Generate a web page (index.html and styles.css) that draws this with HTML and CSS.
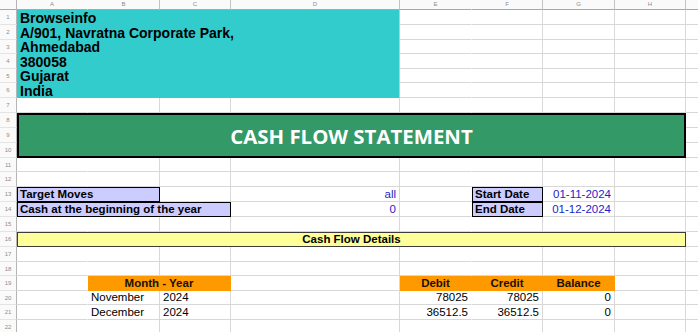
FILE: index.html
```html
<!DOCTYPE html>
<html lang="en">
<head>
<meta charset="utf-8">
<title>Cash Flow Statement</title>
<link rel="stylesheet" href="styles.css">
</head>
<body>
<table class="sheet">
  <colgroup>
    <col class="c-rh"><col class="c-a"><col class="c-b"><col class="c-c"><col class="c-d"><col class="c-e"><col class="c-f"><col class="c-g"><col class="c-h"><col class="c-x">
  </colgroup>
  <thead>
    <tr class="hdr">
      <th class="corner"></th><th class="ch nr">A</th><th class="ch">B</th><th class="ch">C</th><th class="ch">D</th><th class="ch nr">E</th><th class="ch">F</th><th class="ch">G</th><th class="ch">H</th><th class="ch fill"></th>
    </tr>
  </thead>
  <tbody>
    <tr class="h15"><th class="rh">1</th><td class="teal" colspan="4">Browseinfo</td><td class="nr"></td><td></td><td></td><td></td><td class="fill"></td></tr>
    <tr class="h15"><th class="rh">2</th><td class="teal" colspan="4">A/901, Navratna Corporate Park,</td><td class="nr"></td><td></td><td></td><td></td><td class="fill"></td></tr>
    <tr class="h14"><th class="rh">3</th><td class="teal" colspan="4">Ahmedabad</td><td class="nr"></td><td></td><td></td><td></td><td class="fill"></td></tr>
    <tr class="h15"><th class="rh">4</th><td class="teal" colspan="4">380058</td><td class="nr"></td><td></td><td></td><td></td><td class="fill"></td></tr>
    <tr class="h14"><th class="rh">5</th><td class="teal" colspan="4">Gujarat</td><td class="nr"></td><td></td><td></td><td></td><td class="fill"></td></tr>
    <tr class="h15"><th class="rh">6</th><td class="teal" colspan="4">India</td><td class="nr"></td><td></td><td></td><td></td><td class="fill"></td></tr>
    <tr class="h15"><th class="rh">7</th><td class="nr"></td><td></td><td></td><td></td><td class="nr"></td><td></td><td></td><td></td><td class="fill"></td></tr>
    <tr class="h15"><th class="rh">8</th><td class="band" colspan="8" rowspan="3">CASH FLOW STATEMENT</td><td class="fill"></td></tr>
    <tr class="h15"><th class="rh">9</th><td class="fill"></td></tr>
    <tr class="h15"><th class="rh">10</th><td class="fill"></td></tr>
    <tr class="h14"><th class="rh">11</th><td class="nr"></td><td></td><td></td><td></td><td class="nr"></td><td></td><td></td><td></td><td class="fill"></td></tr>
    <tr class="h15"><th class="rh">12</th><td class="nr"></td><td></td><td></td><td></td><td class="nr"></td><td></td><td></td><td></td><td class="fill"></td></tr>
    <tr class="h15"><th class="rh">13</th><td class="lav" colspan="2">Target Moves</td><td></td><td class="val">all</td><td class="nr"></td><td class="lav">Start Date</td><td class="val">01-11-2024</td><td></td><td class="fill"></td></tr>
    <tr class="h14"><th class="rh">14</th><td class="lav" colspan="3">Cash at the beginning of the year</td><td class="val">0</td><td class="nr"></td><td class="lav">End Date</td><td class="val">01-12-2024</td><td></td><td class="fill"></td></tr>
    <tr class="h15"><th class="rh">15</th><td class="nr"></td><td></td><td></td><td></td><td class="nr"></td><td></td><td></td><td></td><td class="fill"></td></tr>
    <tr class="h15"><th class="rh">16</th><td class="yellow" colspan="8">Cash Flow Details</td><td class="fill"></td></tr>
    <tr class="h15"><th class="rh">17</th><td class="nr"></td><td></td><td></td><td></td><td class="nr"></td><td></td><td></td><td></td><td class="fill"></td></tr>
    <tr class="h14"><th class="rh">18</th><td class="nr"></td><td></td><td></td><td></td><td class="nr"></td><td></td><td></td><td></td><td class="fill"></td></tr>
    <tr class="h15"><th class="rh">19</th><td class="nr"></td><td class="orange" colspan="2">Month - Year</td><td></td><td class="orange">Debit</td><td class="orange">Credit</td><td class="orange">Balance</td><td></td><td class="fill"></td></tr>
    <tr class="h14"><th class="rh">20</th><td class="nr"></td><td>November</td><td>2024</td><td></td><td class="nr num">78025</td><td class="num">78025</td><td class="num">0</td><td></td><td class="fill"></td></tr>
    <tr class="h15"><th class="rh">21</th><td class="nr"></td><td>December</td><td>2024</td><td></td><td class="nr num">36512.5</td><td class="num">36512.5</td><td class="num">0</td><td></td><td class="fill"></td></tr>
    <tr class="h15"><th class="rh">22</th><td class="nr"></td><td></td><td></td><td></td><td class="nr"></td><td></td><td></td><td></td><td class="fill"></td></tr>
  </tbody>
</table>
</body>
</html>
```

FILE: styles.css
```css
html, body {
  margin: 0;
  padding: 0;
  overflow: hidden;
  background: #ffffff;
}

body {
  font-family: "Liberation Sans", Arial, sans-serif;
}

.sheet {
  border-collapse: separate;
  border-spacing: 0;
  table-layout: fixed;
  width: 698px;
  font-size: 11.5px;
  line-height: 13px;
  color: #000;
}

.c-rh { width: 17px; }
.c-a { width: 71px; }
.c-b { width: 72px; }
.c-c { width: 71px; }
.c-d { width: 169px; }
.c-e { width: 72px; }
.c-f { width: 71px; }
.c-g { width: 72px; }
.c-h { width: 71px; }
.c-x { width: 12px; }

.hdr { height: 10px; }
.h15 { height: 15px; }
.h14 { height: 14px; }

.sheet th,
.sheet td {
  padding: 0;
  white-space: nowrap;
  overflow: visible;
}

.corner {
  border-right: 1px solid #b5b5b5;
  border-bottom: 1px solid #a8a8a8;
  background: #fafafa;
}

.ch {
  font-size: 6px;
  line-height: 9px;
  font-weight: normal;
  color: #8c8c8c;
  text-align: center;
  vertical-align: middle;
  background: #fafafa;
  border-right: 1px solid #c4c4c4;
  border-bottom: 1px solid #a8a8a8;
}

.rh {
  font-size: 6px;
  line-height: 8px;
  font-weight: normal;
  color: #8c8c8c;
  text-align: center;
  vertical-align: middle;
  background: #fafafa;
  border-right: 1px solid #b5b5b5;
  border-bottom: 1px solid #e4e4e4;
}

.sheet td {
  padding: 0 3px;
  vertical-align: bottom;
  border-right: 1px solid #d8d8d8;
  border-bottom: 1px solid #d8d8d8;
}

.sheet .nr { border-right-color: transparent; }
.sheet .ch.nr { border-right-color: transparent; }
.sheet .fill { border-right: 0; }

.sheet .teal {
  background: #33cccc;
  font-size: 14px;
  line-height: 13px;
  font-weight: bold;
  border-bottom: 0;
  border-right: 1px solid #c8c8c8;
}

.sheet .band {
  background: #339966;
  border: 2px solid #000;
  color: #ffffff;
  font-family: "Open Sans", "Liberation Sans", sans-serif;
  font-weight: 700;
  font-size: 20.4px;
  line-height: 22px;
  text-align: center;
  vertical-align: middle;
}

.sheet .lav {
  background: #ccccff;
  border: 1px solid #000;
  padding-left: 2px;
  font-weight: bold;
}

.sheet .val {
  text-align: right;
  color: #1e1ec8;
}

.sheet .num {
  text-align: right;
}

.sheet .yellow {
  background: #ffff99;
  border: 1px solid #3c3c3c;
  font-weight: bold;
  text-align: center;
}

.sheet .orange {
  background: #ff9900;
  border-right-color: #ff9900;
  border-bottom-color: #ff9900;
  font-weight: bold;
  text-align: center;
  color: #1c1000;
}
```
